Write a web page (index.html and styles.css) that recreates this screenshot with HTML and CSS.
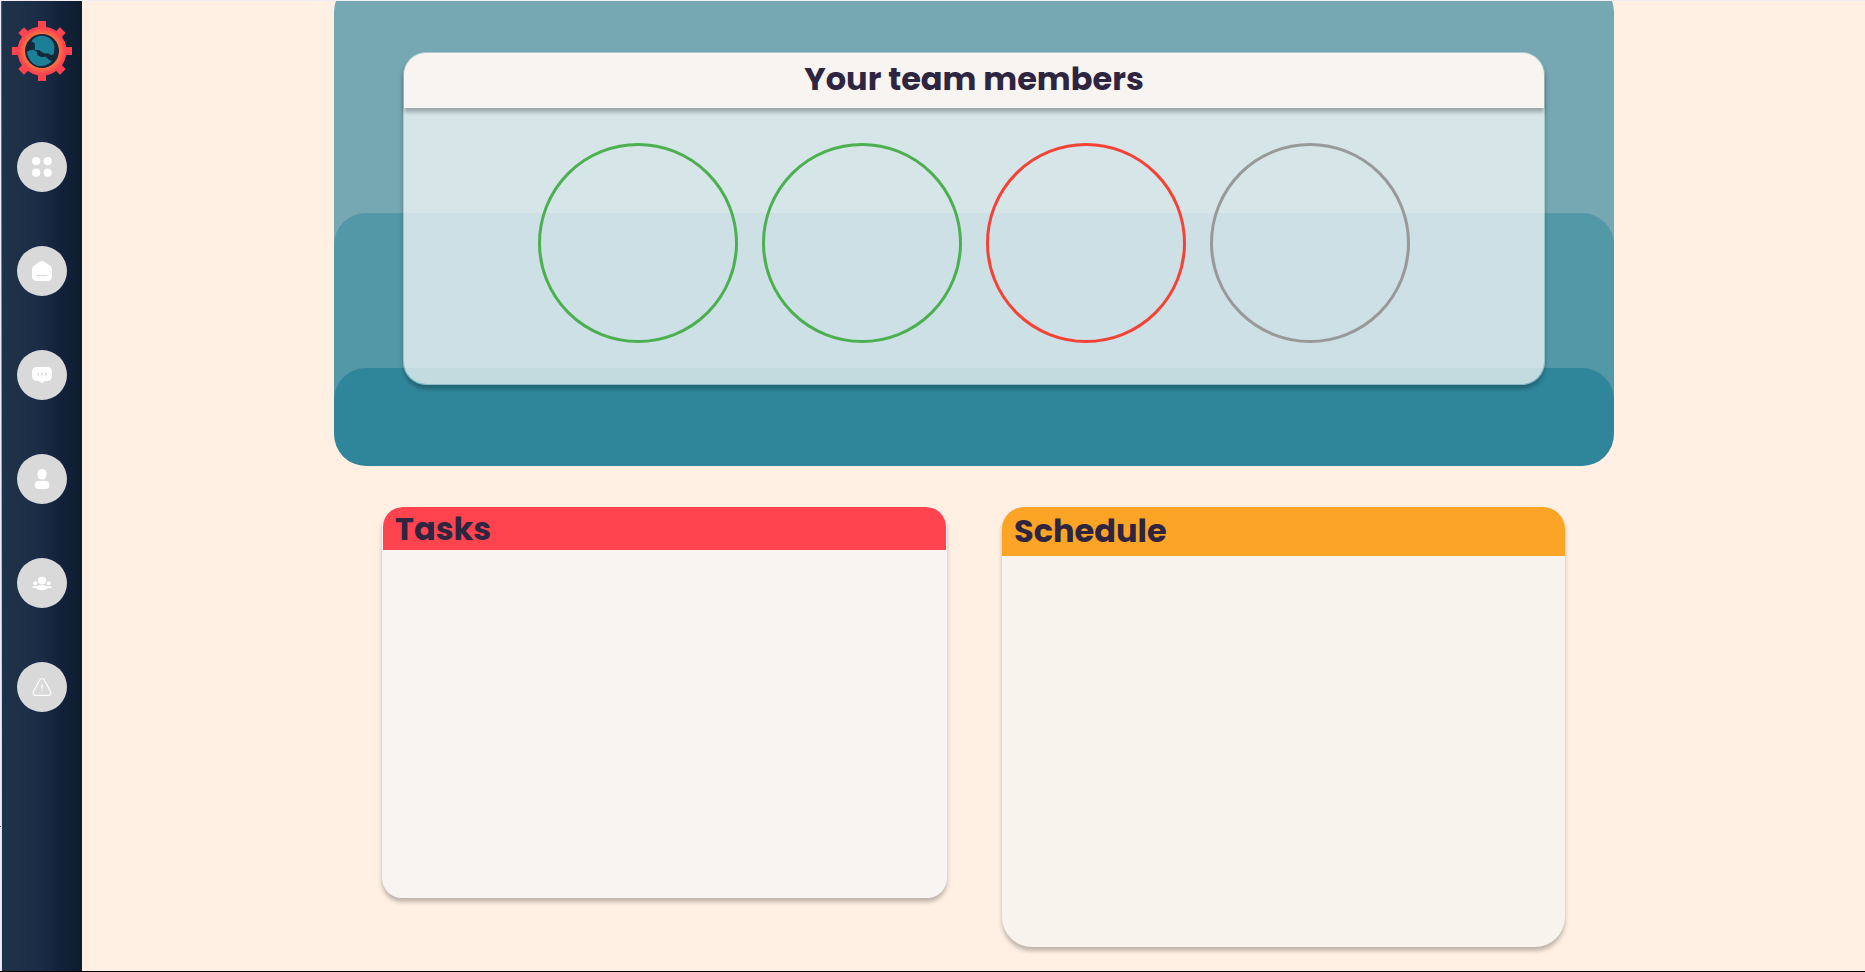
FILE: index.html
```html
<!DOCTYPE html>
<html lang="en">
<head>
<meta charset="utf-8">
<title>Team dashboard</title>
<link rel="stylesheet" href="styles.css">
</head>
<body>
<div class="app">
  <div class="edge"><i class="tick"></i></div>
  <nav class="sidebar">
    <svg class="logo" viewBox="-30 -30 60 60">
      <defs>
        <radialGradient id="ring" gradientUnits="userSpaceOnUse" cx="0" cy="0" r="24">
          <stop offset=".68" stop-color="#ff7a3c"/><stop offset=".95" stop-color="#ff4450"/>
        </radialGradient>
      </defs>
      <g fill="#ff4450">
        <rect x="-4" y="-30" width="8" height="60"/>
        <rect x="-30" y="-4" width="60" height="8"/>
        <rect x="-4" y="-29.5" width="8" height="59" transform="rotate(45)"/>
        <rect x="-4" y="-29.5" width="8" height="59" transform="rotate(-45)"/>
      </g>
      <circle r="24.5" fill="url(#ring)"/>
      <circle r="17" fill="#14283c"/>
      <path fill="#1b8097" d="M-10.5-9.5C-8-13.5-4-15.2 0-15.2C7-15 12-10 12.6-4L11.8 3L9.5 4.3L6 2.2L3 2.6L0 1.2L-3-1L-7-1L-7.3-8Z"/>
      <path fill="#1b8097" d="M-15 .8L-12-.8L-8.5-1.2L-5.5 .4L-4.2 4.6L0 6.2L3.5 5.6L6 8L9.6 10.2C6 14 1 15.4-3 15C-9 14-14 9-15 .8Z"/>
    </svg>
    <a class="nav-item"><svg viewBox="0 0 50 50"><circle cx="19.2" cy="19.2" r="4.1"/><circle cx="30.7" cy="19.2" r="4.1"/><circle cx="19.2" cy="30.7" r="4.1"/><circle cx="30.7" cy="30.7" r="4.1"/></svg></a>
    <a class="nav-item"><svg viewBox="0 0 50 50"><path d="M22.5 15.8Q25 14.2 27.5 15.8L33.2 19.8Q35 21.2 35 23.4V30Q35 35 30 35H20Q15 35 15 30V23.4Q15 21.2 16.8 19.8Z"/><path class="cut" d="M20 29.5H30"/></svg></a>
    <a class="nav-item"><svg viewBox="0 0 50 50"><path d="M20 17H30Q35 17 35 22V26Q35 31 30 31H28L25.8 32.8Q25 33.4 24.2 32.8L22 31H20Q15 31 15 26V22Q15 17 20 17Z"/><path class="cut dots" d="M21.3 23.3V24.9M25 23.3V24.9M28.7 23.3V24.9"/></svg></a>
    <a class="nav-item"><svg viewBox="0 0 50 50"><rect x="20.5" y="15" width="9" height="10.4" rx="4.3"/><rect x="17.7" y="27" width="14.8" height="8" rx="3.8"/></svg></a>
    <a class="nav-item"><svg viewBox="0 0 50 50"><ellipse cx="25" cy="22.6" rx="4.2" ry="3.8"/><circle cx="18.3" cy="25.2" r="2"/><circle cx="31.7" cy="25.2" r="2"/><path d="M15.6 28.2H20Q25 26.4 30 28.2H34.4V30H31Q29 32.2 25 32.2Q21 32.2 19 30H15.6Z"/></svg></a>
    <a class="nav-item"><svg viewBox="0 0 50 50"><path class="line" d="M22.7 18.2Q25 14.8 27.3 18.2L33.5 29.3Q35 33.2 31.2 33.4H18.8Q15 33.2 16.5 29.3Z"/><path class="line" d="M25 22.8V26M25 28.8V29"/></svg></a>
  </nav>
  <main class="main">
    <section class="hero">
      <div class="layer layer-back"></div>
      <div class="layer layer-mid"></div>
      <div class="layer layer-front"></div>
      <div class="team">
        <h1 class="team-title">Your team members</h1>
        <div class="members">
          <div class="member online"></div>
          <div class="member online"></div>
          <div class="member busy"></div>
          <div class="member away"></div>
        </div>
      </div>
    </section>
    <div class="panels">
      <section class="panel tasks"><h2>Tasks</h2></section>
      <section class="panel schedule"><h2>Schedule</h2></section>
    </div>
  </main>
</div>
</body>
</html>
```
FILE: styles.css
```css
* { box-sizing: border-box; }
body {
  margin: 0;
  background: #fff0e3;
  color: #2e2540;
  font-family: Poppins, Inter, sans-serif;
  overflow: hidden;
}
.app {
  display: flex;
  height: 972px;
  border-top: 1px solid #f1edf3;
  border-bottom: 1px solid #000;
  overflow: hidden;
}
.edge {
  flex: none;
  width: 2px;
  padding-top: 825px;
  border-left: 1px solid #eeeafb;
  background: linear-gradient(#6a35e0, #a98cf0 45%, #ddd6fa 75%, #e6e0fa);
}
.tick { display: block; width: 1px; height: 1px; margin-left: -1px; background: #555; }
.sidebar {
  flex: none;
  width: 80px;
  display: flex;
  flex-direction: column;
  align-items: center;
  gap: 54px;
  padding-top: 20px;
  background: linear-gradient(90deg, #1e334a 0%, #1b2d46 45%, #12223b 72%, #0d1c2e 100%);
}
.logo { flex: none; width: 60px; height: 60px; margin-bottom: 7px; }
.nav-item {
  flex: none;
  width: 50px;
  height: 50px;
  border-radius: 50%;
  background: #d9d9d9;
}
.nav-item svg { display: block; width: 50px; height: 50px; fill: #fff; }
.nav-item .cut { fill: none; stroke: #d9d9d9; stroke-width: 1.2; stroke-linecap: round; }
.nav-item .dots { stroke-width: 1.5; }
.nav-item .line { fill: none; stroke: #fff; stroke-width: 1.2; stroke-linecap: round; stroke-linejoin: round; }
.main { flex: 1; padding-left: 252px; }
.hero {
  display: grid;
  width: 1280px;
  height: 485.5px;
  margin-top: -21px;
}
.layer, .team { grid-area: 1 / 1; }
.layer { border-radius: 32px; }
.layer-back { background: #75a8b3; margin-bottom: 40px; }
.layer-mid { margin: 233px 0 20px; background: #5398a7; }
.layer-front { margin-top: 388px; background: #2f869a; }
.team {
  width: 1142px;
  height: 333px;
  margin: 72px 0 0 69px;
  border: 1px solid rgba(214, 229, 232, .55);
  border-radius: 23px;
  background: linear-gradient(#d6e5e8 160px, #cde0e5 160px 315px, #c2dbdf 315px) padding-box;
  box-shadow: 0 4px 4px rgba(0, 0, 0, .25);
}
.team-title {
  height: 55px;
  margin: 0;
  border-radius: 22px 22px 0 0;
  background: #f8f4f1;
  box-shadow: 0 4px 4px rgba(0, 0, 0, .28);
  font-size: 32px;
  line-height: 52px;
  text-align: center;
}
.members { display: flex; justify-content: center; gap: 24px; padding-top: 35px; }
.member { width: 200px; height: 200px; border: 3px solid; border-radius: 50%; }
.online { border-color: #4caf50; }
.busy { border-color: #f44336; }
.away { border-color: #999; }
.panels { display: flex; align-items: flex-start; gap: 55px; padding: 41.5px 0 0 48px; }
.panel { overflow: hidden; box-shadow: 0 4px 4px rgba(0, 0, 0, .25); }
.panel h2 { margin: 0; font-size: 32px; }
.tasks { width: 565px; height: 391px; border-radius: 20px; background: #f8f4f1; }
.tasks h2 { height: 43px; margin: 0 1px; padding-left: 12px; border-radius: 20px 20px 0 0; background: #ff4450; line-height: 44px; }
.schedule { width: 563px; height: 440px; border-radius: 22px 22px 30px 30px; background: #f8f3ec; }
.schedule h2 { height: 49px; padding-left: 12px; background: #fba425; line-height: 48px; }
```
